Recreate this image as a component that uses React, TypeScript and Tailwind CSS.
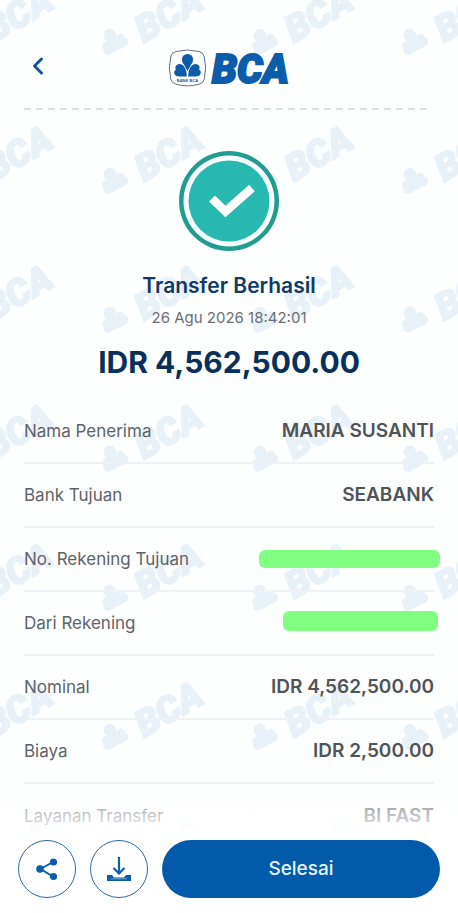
import React from 'react'
import { ChevronLeft } from 'lucide-react'

const details = [
  { label: 'Nama Penerima', value: 'MARIA SUSANTI' },
  { label: 'Bank Tujuan', value: 'SEABANK' },
  { label: 'No. Rekening Tujuan', hidden: 'long' },
  { label: 'Dari Rekening', hidden: 'short' },
  { label: 'Nominal', value: 'IDR 4,562,500.00' },
  { label: 'Biaya', value: 'IDR 2,500.00' },
  { label: 'Layanan Transfer', value: 'BI FAST' },
]

function Clover() {
  return (
    <g>
      <circle cx="18" cy="8.500" r="5.600" />
      <path d="M13 11 L18 20 L23 11Z" />
      <path d="M17.3 25.5 C17.2 21 16.6 18.6 14.6 15.6 C12.6 12.4 8 12 6.2 15.2 C5.6 16.6 5.8 17.6 6.6 18.6 C4.8 19.4 4.2 21.4 5 23 C5.8 24.8 7.6 25.5 10 25.5Z" />
      <path d="M18.7 25.5 C18.8 21 19.4 18.6 21.4 15.6 C23.4 12.4 28 12 29.8 15.2 C30.4 16.6 30.2 17.6 29.4 18.6 C31.2 19.4 31.8 21.4 31 23 C30.2 24.8 28.4 25.5 26 25.5Z" />
    </g>
  )
}

function Watermark() {
  return (
    <svg className="absolute inset-0 -z-10 h-full w-full" aria-hidden="true">
      <defs>
        <pattern id="bca-mark" x="90" y="93" width="150" height="139" patternUnits="userSpaceOnUse">
          <g fill="#e9f1f8" stroke="#e9f1f8" strokeWidth="2">
            <g transform="translate(1 82) rotate(-28) scale(0.95)">
              <Clover />
            </g>
            <text transform="translate(54 89) rotate(-30)" className="font-['Roboto'] text-[37px] font-black italic">
              BCA
            </text>
          </g>
        </pattern>
      </defs>
      <rect width="100%" height="100%" fill="url(#bca-mark)" />
    </svg>
  )
}

function Logo() {
  return (
    <svg width="124" height="52" viewBox="-2 -7 124 52" fill="#0b5cab" role="img" aria-label="BCA">
      <path
        d="M7 2.5 Q18.500 -0.500 30 2.500 Q34.500 3.500 35.300 8 Q38 19 35.300 30 Q34.500 34 30 35.200 Q18.500 38.500 7 35.200 Q2.500 34 1.700 30 Q-1 19 1.700 8 Q2.500 3.500 7 2.500Z"
        fill="#fff"
        stroke="#5c7286"
        strokeWidth="1"
      />
      <g transform="translate(0.5 2)">
        <Clover />
      </g>
      <text x="18.500" y="33" textAnchor="middle" className="font-['Liberation_Sans'] text-[4px] font-bold">
        BANK BCA
      </text>
      <text
        x="43"
        y="34"
        stroke="#0b5cab"
        strokeWidth="2"
        className="font-['Roboto'] text-[40px] font-black italic"
      >
        BCA
      </text>
    </svg>
  )
}

function SuccessBadge() {
  return (
    <svg width="102" height="102" viewBox="0 0 102 102" aria-hidden="true">
      <circle cx="51" cy="51" r="50" fill="#219c90" />
      <circle cx="51" cy="51" r="45.500" fill="#f6fdff" />
      <circle cx="51" cy="51" r="40.500" fill="#27b8b0" />
      <path d="M34 48.500 L47.500 61.500 L74 38" fill="none" stroke="#fff" strokeWidth="8.500" />
    </svg>
  )
}

export default function App() {
  return (
    <div className="relative isolate flex min-h-screen flex-col bg-[#fdfefe] font-['Inter',sans-serif]">
      <Watermark />

      <header className="px-6 pt-[42px]">
        <div className="grid grid-cols-[40px_1fr_40px] items-center pb-[14px]">
          <button type="button" aria-label="Kembali" className="-ml-1.5 flex h-10 w-10 items-center justify-center pb-1 text-[#0f5299]">
            <ChevronLeft className="h-7 w-7" strokeWidth={2.5} />
          </button>
          <div className="flex justify-center">
            <Logo />
          </div>
        </div>
        <div className="mr-1.5 h-0.5 bg-[repeating-linear-gradient(90deg,#dfe1e1_0_7px,transparent_7px_12px)]" />
      </header>

      <main className="flex flex-1 flex-col">
        <section className="flex flex-col items-center pt-10">
          <SuccessBadge />
          <h1 className="mt-5 text-[21px] leading-7 font-semibold text-[#103a63]">Transfer Berhasil</h1>
          <p className="mt-2 text-[15px] leading-5 text-[#6b6e72]">26 Agu 2026 18:42:01</p>
          <p className="mt-4 text-[30px] leading-9 font-bold text-[#08305a]">IDR 4,562,500.00</p>
        </section>

        <dl className="mt-5 px-6">
          {details.map((item) => (
            <div
              key={item.label}
              className="flex h-16 items-center justify-between border-b-2 border-[#eff2f4] last:border-b-0"
            >
              <dt className="text-[17px] leading-6 text-[#5f6368]">{item.label}</dt>
              <dd className="text-[19px] leading-6 font-semibold text-[#505458]">
                {item.value}
                {item.hidden === 'long' && (
                  <span className="-mr-1.5 block h-[18px] w-[181px] rounded-md bg-[#80ff80]" />
                )}
                {item.hidden === 'short' && (
                  <span className="-mr-1 mb-1 block h-5 w-[155px] rounded-md bg-[#80ff80]" />
                )}
              </dd>
            </div>
          ))}
        </dl>
      </main>

      <footer className="sticky bottom-0 -mt-20 flex gap-[14px] bg-linear-to-b from-transparent to-white to-45% px-[18px] pt-16 pb-[15px]">
        <button
          type="button"
          aria-label="Bagikan"
          className="flex h-[58px] w-[58px] shrink-0 items-center justify-center rounded-full border border-[#2d699f] bg-white"
        >
          <svg width="24" height="24" viewBox="0 0 24 24" fill="#0b5cab" stroke="#0b5cab" strokeWidth="2">
            <path d="M18 5 L5.500 12 L18 19.500" fill="none" />
            <circle cx="18.500" cy="5" r="2.600" />
            <circle cx="5" cy="12" r="2.800" />
            <circle cx="18.500" cy="19.500" r="2.600" />
          </svg>
        </button>
        <button
          type="button"
          aria-label="Unduh"
          className="flex h-[58px] w-[58px] shrink-0 items-center justify-center rounded-full border border-[#2d699f] bg-white"
        >
          <svg width="26" height="26" viewBox="0 0 26 26" fill="none" stroke="#0b5cab" strokeWidth="2.200">
            <path d="M13 1 V17 M7.500 12 L13 17.500 L18.500 12" />
            <path d="M1 19 H6 L8 21.500 H18 L20 19 H25 V25 H1Z" fill="#0b5cab" stroke="none" />
            <path d="M5 22.800 H21" stroke="#8db5dc" strokeWidth="0.800" />
          </svg>
        </button>
        <button type="button" className="h-[58px] flex-1 rounded-full bg-[#035aaa] text-[19px] font-medium text-[#e4f2ff]">
          Selesai
        </button>
      </footer>
    </div>
  )
}
